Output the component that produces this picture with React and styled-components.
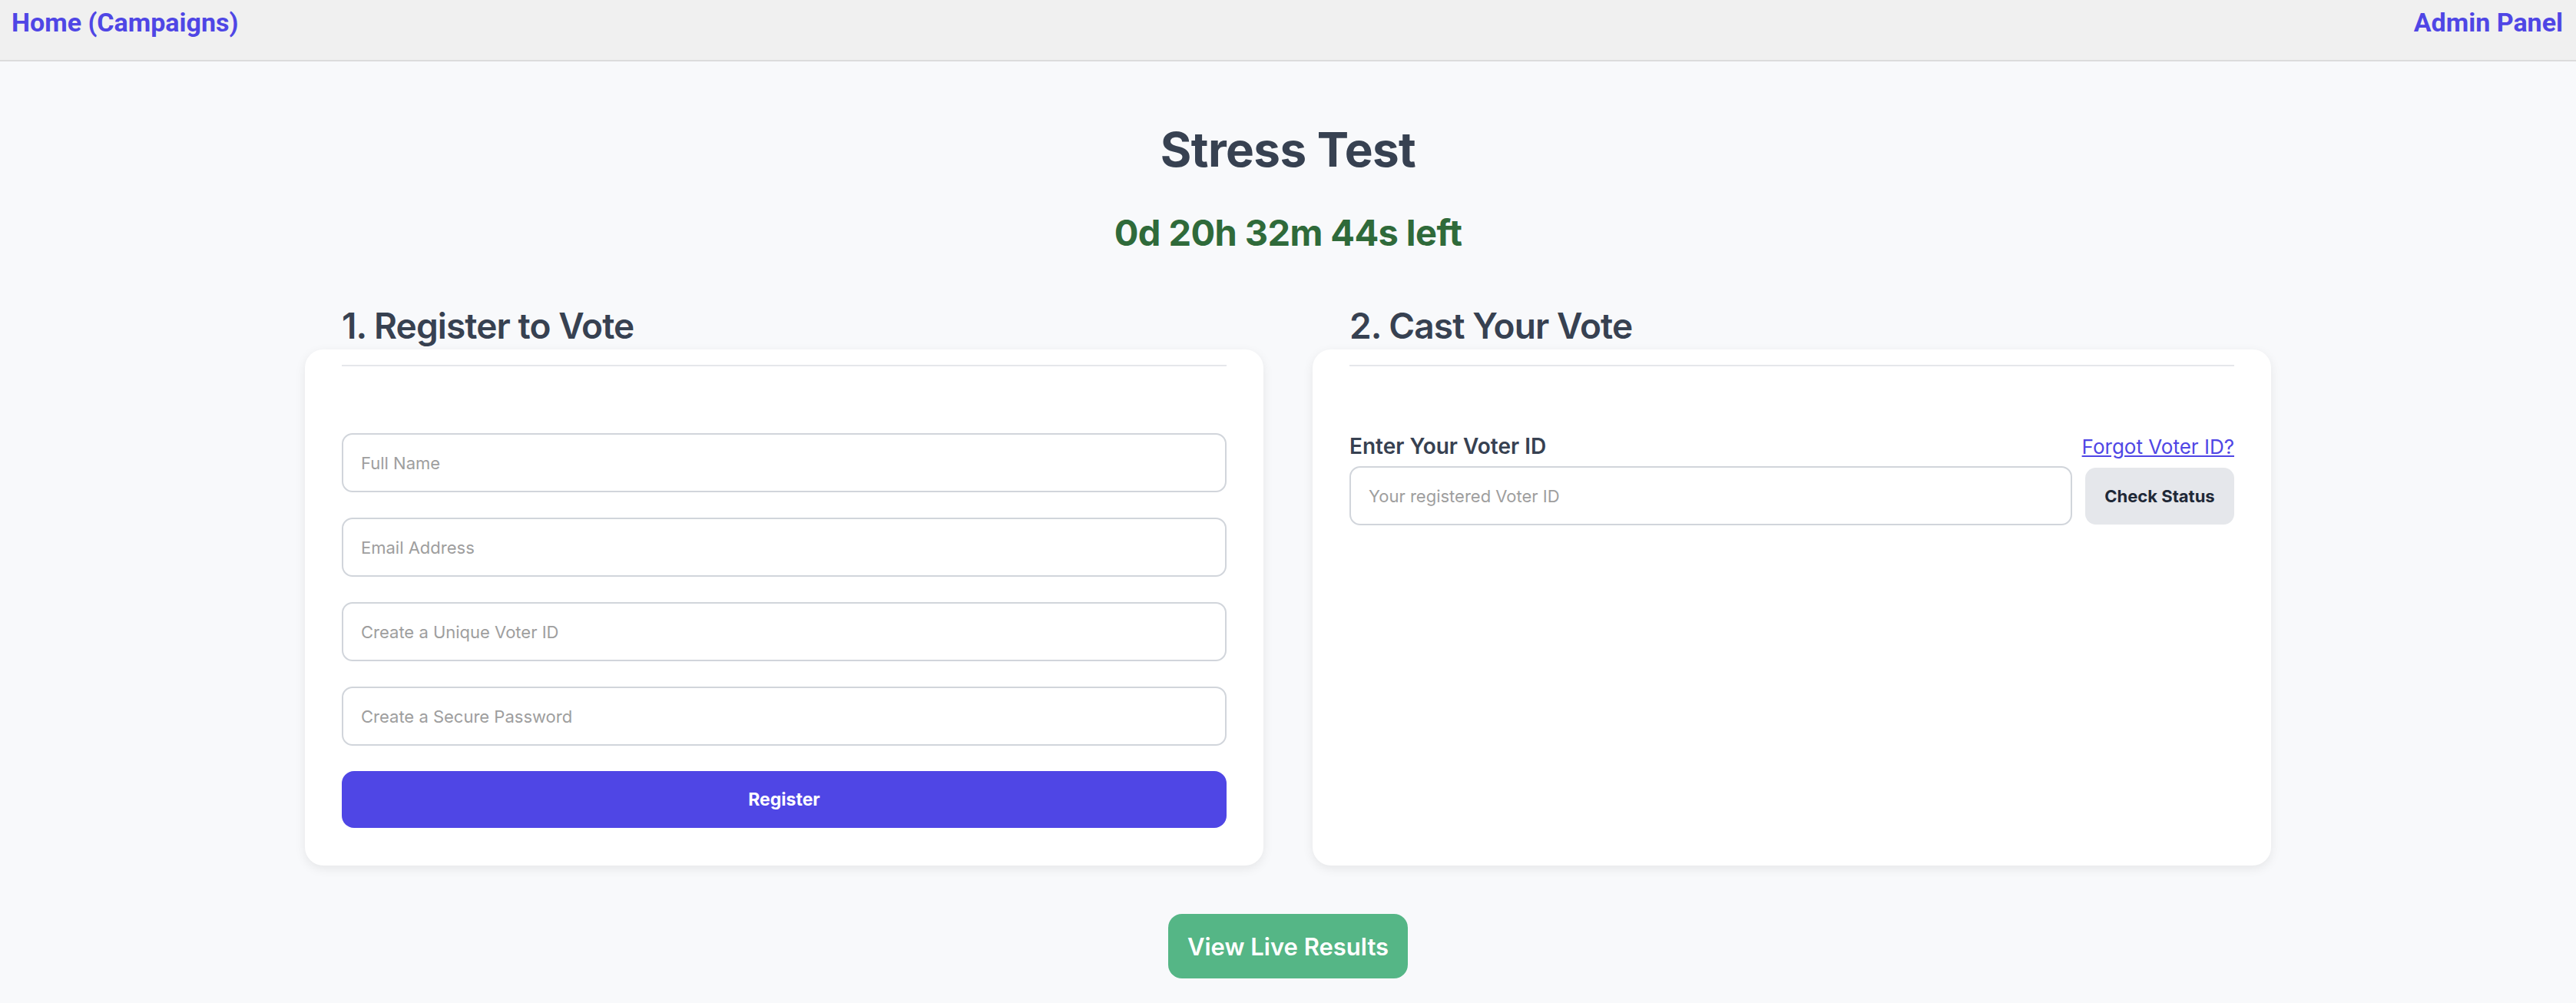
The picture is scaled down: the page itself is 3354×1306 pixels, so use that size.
import React from "react";
import styled, { createGlobalStyle } from "styled-components";

const GlobalStyle = createGlobalStyle`
	* {
		box-sizing: border-box;
	}
	body {
		margin: 0;
		background: #f8f9fb;
		font-family: Inter, "Noto Sans", sans-serif;
		color: #374151;
	}
`;

function App() {
	return (
		<>
			<GlobalStyle />
			<Nav>
				<NavLink href="#">Home (Campaigns)</NavLink>
				<NavLink href="#">Admin Panel</NavLink>
			</Nav>
			<Main>
				<Title>Stress Test</Title>
				<Countdown>0d 20h 32m 44s left</Countdown>
				<Columns>
					<Column>
						<SectionTitle>1. Register to Vote</SectionTitle>
						<Card>
							<Divider />
							<Form>
								<Input placeholder="Full Name" />
								<Input placeholder="Email Address" />
								<Input placeholder="Create a Unique Voter ID" />
								<Input type="password" placeholder="Create a Secure Password" />
								<PrimaryButton type="button">Register</PrimaryButton>
							</Form>
						</Card>
					</Column>
					<Column>
						<SectionTitle>2. Cast Your Vote</SectionTitle>
						<Card>
							<Divider />
							<Form>
								<LabelRow>
									<Label>Enter Your Voter ID</Label>
									<TextLink href="#">Forgot Voter ID?</TextLink>
								</LabelRow>
								<InputRow>
									<Input $grow placeholder="Your registered Voter ID" />
									<SecondaryButton type="button">Check Status</SecondaryButton>
								</InputRow>
							</Form>
						</Card>
					</Column>
				</Columns>
				<ResultsButton type="button">View Live Results</ResultsButton>
			</Main>
		</>
	);
}

export default App;

const Nav = styled.nav`
	height: 80px;
	display: flex;
	justify-content: space-between;
	align-items: flex-start;
	padding: 9px 17px 0 15px;
	background: #f0f0f0;
	border-bottom: 2px solid #dcdcdc;
`;

const NavLink = styled.a`
	font-family: Roboto, Inter, sans-serif;
	font-size: 34px;
	font-weight: 700;
	color: #4f46e5;
	text-decoration: none;
`;

const Main = styled.main`
	display: flex;
	flex-direction: column;
	align-items: center;
	padding-top: 76px;
`;

const Title = styled.h1`
	margin: 0;
	font-size: 62px;
	line-height: 77px;
	font-weight: 700;
	letter-spacing: -0.6px;
	color: #374151;
`;

const Countdown = styled.div`
	margin-top: 41px;
	font-size: 47px;
	line-height: 58px;
	font-weight: 700;
	letter-spacing: -0.6px;
	color: #2f6a3a;
`;

const Columns = styled.div`
	width: 2560px;
	margin-top: 63px;
	display: grid;
	grid-template-columns: 1fr 1fr;
	gap: 64px;
`;

const Column = styled.section`
	display: flex;
	flex-direction: column;
`;

const SectionTitle = styled.h2`
	margin: 0 0 2px 48px;
	font-size: 46px;
	line-height: 58px;
	font-weight: 600;
	letter-spacing: -0.9px;
	color: #374151;
`;

const Card = styled.div`
	flex: 1;
	min-height: 672px;
	background: #ffffff;
	border-radius: 24px;
	padding: 20px 48px 49px;
	box-shadow: 0 4px 14px rgba(0, 0, 0, 0.08);
`;

const Divider = styled.hr`
	margin: 0;
	border: none;
	height: 2px;
	background: #e5e7eb;
`;

const Form = styled.div`
	margin-top: 87px;
	display: flex;
	flex-direction: column;
	gap: 33px;
`;

const Input = styled.input`
	width: 100%;
	height: 77px;
	flex: ${(p) => (p.$grow ? "1" : "none")};
	padding: 0 23px;
	border: 2px solid #d1d5db;
	border-radius: 14px;
	background: #fff;
	font-family: Inter, sans-serif;
	font-size: 22px;
	color: #111827;
	outline: none;

	&::placeholder {
		color: #9e9e9e;
	}
`;

const PrimaryButton = styled.button`
	height: 74px;
	border: none;
	border-radius: 16px;
	background: #4f46e5;
	color: #fff;
	font-family: Inter, sans-serif;
	font-size: 23px;
	font-weight: 700;
	cursor: pointer;
`;

const LabelRow = styled.div`
	display: flex;
	justify-content: space-between;
	align-items: baseline;
	margin-bottom: -24px;
`;

const Label = styled.label`
	font-size: 28px;
	line-height: 34px;
	font-weight: 600;
	color: #374151;
`;

const TextLink = styled.a`
	font-size: 26px;
	color: #4f46e5;
	text-decoration: underline;
`;

const InputRow = styled.div`
	display: flex;
	align-items: center;
	gap: 17px;
`;

const SecondaryButton = styled.button`
	width: 194px;
	height: 74px;
	flex-shrink: 0;
	border: none;
	border-radius: 14px;
	background: #e5e7eb;
	color: #1f2937;
	font-family: Inter, sans-serif;
	font-size: 22px;
	font-weight: 700;
	cursor: pointer;
`;

const ResultsButton = styled.button`
	margin-top: 63px;
	height: 84px;
	padding: 0 25px;
	border: none;
	border-radius: 18px;
	background: #55b686;
	color: #fff;
	font-family: Inter, sans-serif;
	font-size: 31px;
	font-weight: 600;
	cursor: pointer;
`;
